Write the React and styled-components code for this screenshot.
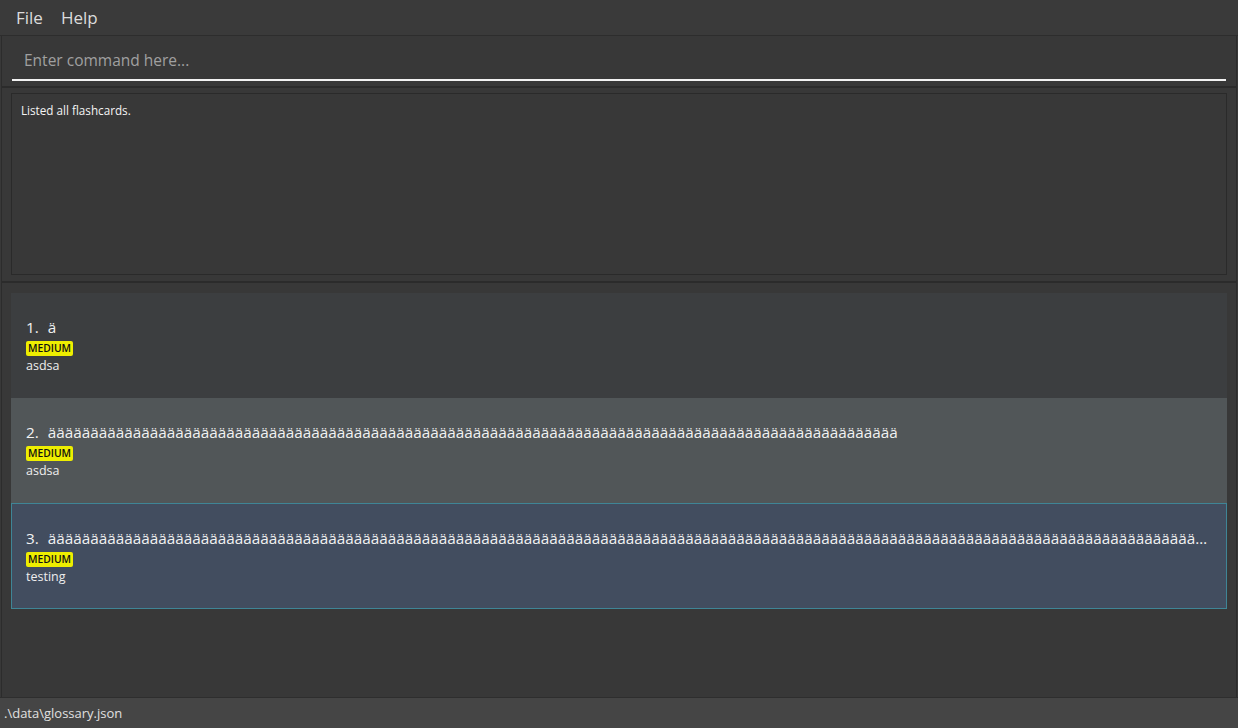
import React from "react";
import styled, { createGlobalStyle } from "styled-components";

const Global = createGlobalStyle`
  html, body { margin: 0; padding: 0; background: #383838; }
  body { font-family: "Open Sans", "Noto Sans", sans-serif; overflow: hidden; }
  #root { width: 1238px; height: 728px; }
`;

const Window = styled.div`
  width: 1238px;
  height: 728px;
  display: flex;
  flex-direction: column;
  background: #383838;
`;

const MenuBar = styled.div`
  height: 36px;
  flex-shrink: 0;
  display: flex;
  align-items: center;
  gap: 18px;
  padding-left: 16px;
  background: #3a3a3a;
  border-bottom: 1px solid #2d2d2d;
  box-sizing: border-box;
`;

const MenuItem = styled.span`
  font-size: 17px;
  color: #dcdcdc;
`;

const Body = styled.div`
  flex: 1;
  display: flex;
  flex-direction: column;
  border-left: 1px solid #2c2c2c;
  border-right: 1px solid #2c2c2c;
  margin: 0 1px;
  min-height: 0;
`;

const CommandPane = styled.div`
  height: 52px;
  flex-shrink: 0;
  padding: 0 10px 5px 10px;
  box-sizing: border-box;
  display: flex;
  align-items: flex-end;
  border-bottom: 2px solid #2b2b2b;
`;

const CommandInput = styled.div`
  flex: 1;
  height: 40px;
  box-sizing: border-box;
  display: flex;
  align-items: center;
  padding-left: 12px;
  border-bottom: 2px solid #f2f2f2;
  font-size: 15.5px;
  color: #a0a0a0;
`;

const ResultPane = styled.div`
  height: 195px;
  flex-shrink: 0;
  box-sizing: border-box;
  padding: 5px 9px 6px 9px;
  border-bottom: 2px solid #2b2b2b;
  display: flex;
`;

const ResultBox = styled.div`
  flex: 1;
  border: 1px solid #2a2a2a;
  padding: 8px 9px;
  font-size: 11.7px;
  color: #f4f4f4;
`;

const ListPane = styled.div`
  flex: 1;
  padding: 10px 9px;
  display: flex;
  flex-direction: column;
  min-height: 0;
`;

const Card = styled.div`
  height: ${(p) => p.$h || 105}px;
  flex-shrink: 0;
  box-sizing: border-box;
  padding: 0 12px 0 14px;
  display: flex;
  flex-direction: column;
  justify-content: center;
  background: ${(p) => p.$bg};
  border: 1px solid ${(p) => p.$border || "transparent"};
  min-width: 0;
`;

const Title = styled.div`
  font-size: 15.3px;
  color: #f2f2f2;
  white-space: nowrap;
  overflow: hidden;
  text-overflow: ellipsis;
  line-height: 20px;
`;

const Index = styled.span`
  margin-right: 9px;
`;

const Badge = styled.span`
  align-self: flex-start;
  background: #eeee00;
  color: #111;
  font-size: 10.3px;
  font-weight: 600;
  line-height: 15px;
  padding: 0 2px;
  border-radius: 2px;
  margin-top: 4px;
`;

const Desc = styled.div`
  font-size: 12.5px;
  color: #eeeeee;
  line-height: 17px;
  margin-top: 1px;
`;

const StatusBar = styled.div`
  height: 31px;
  flex-shrink: 0;
  box-sizing: border-box;
  background: #454545;
  border-top: 1px solid #2e2e2e;
  display: flex;
  align-items: center;
  padding-left: 4px;
  font-size: 13px;
  color: #e0e0e0;
`;

const cards = [
  { n: 1, title: "ä", desc: "asdsa", bg: "#3c3e40" },
  { n: 2, title: "ä".repeat(100), desc: "asdsa", bg: "#515658" },
  { n: 3, title: "ä".repeat(220), desc: "testing", bg: "#424d5f", border: "#3f8596", h: 106 },
];

export default function App() {
  return (
    <Window>
      <Global />
      <MenuBar>
        <MenuItem>File</MenuItem>
        <MenuItem>Help</MenuItem>
      </MenuBar>
      <Body>
        <CommandPane>
          <CommandInput>Enter command here...</CommandInput>
        </CommandPane>
        <ResultPane>
          <ResultBox>Listed all flashcards.</ResultBox>
        </ResultPane>
        <ListPane>
          {cards.map((c) => (
            <Card key={c.n} $bg={c.bg} $border={c.border} $h={c.h}>
              <Title>
                <Index>{c.n}.</Index>
                {c.title}
              </Title>
              <Badge>MEDIUM</Badge>
              <Desc>{c.desc}</Desc>
            </Card>
          ))}
        </ListPane>
      </Body>
      <StatusBar>.\data\glossary.json</StatusBar>
    </Window>
  );
}
